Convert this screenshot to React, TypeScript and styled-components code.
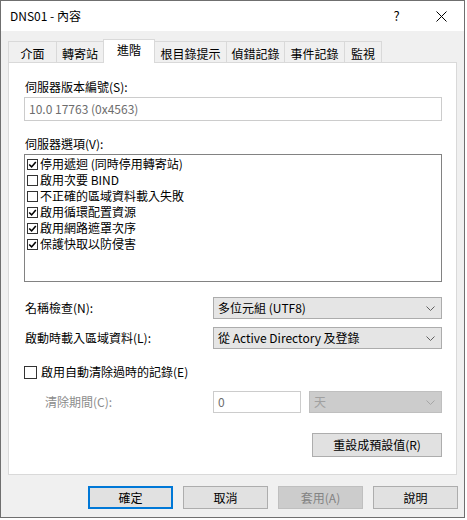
import React from "react";
import styled, { createGlobalStyle } from "styled-components";

const GlobalStyle = createGlobalStyle`
  body {
    margin: 0;
    background: #ffffff;
    font-family: "Segoe UI", "Noto Sans CJK TC", sans-serif;
    font-size: 12px;
    line-height: 16px;
    color: #000000;
  }
`;

const Window = styled.div`
  width: 465px;
  height: 518px;
  box-sizing: border-box;
  border: 1px solid #6f6f6f;
  display: flex;
  flex-direction: column;
  background: #f0f0f0;
`;

const TitleBar = styled.div`
  height: 30px;
  background: #ffffff;
  display: flex;
  align-items: center;
  padding-left: 9px;
`;

const Title = styled.div`
  flex: 1;
`;

const TitleButton = styled.div`
  width: 45px;
  height: 30px;
  display: flex;
  align-items: center;
  justify-content: center;
  font-size: 13px;
`;

const Body = styled.div`
  flex: 1;
  display: flex;
  flex-direction: column;
  padding: 8px 7px 0 7px;
`;

const TabStrip = styled.div`
  height: 23px;
  display: flex;
  align-items: flex-end;
`;

const Tab = styled.div<{ $w: number; $active?: boolean }>`
  width: ${(p) => p.$w}px;
  height: ${(p) => (p.$active ? 24 : 21)}px;
  box-sizing: border-box;
  margin-left: -1px;
  margin-bottom: ${(p) => (p.$active ? -1 : 0)}px;
  padding-top: ${(p) => (p.$active ? 2 : 4)}px;
  border: 1px solid #d9d9d9;
  border-bottom: none;
  background: ${(p) => (p.$active ? "#ffffff" : "#f0f0f0")};
  text-align: center;
  position: relative;
  z-index: ${(p) => (p.$active ? 1 : 0)};
  &:first-child {
    margin-left: 0;
  }
`;

const Panel = styled.div`
  height: 413px;
  box-sizing: border-box;
  border: 1px solid #d9d9d9;
  background: #ffffff;
  padding: 16px 14px 0 15px;
  display: flex;
  flex-direction: column;
`;

const Label = styled.div<{ $gap?: number; $muted?: boolean }>`
  margin-top: ${(p) => p.$gap ?? 0}px;
  padding-left: 1px;
  color: ${(p) => (p.$muted ? "#8c8c8c" : "#000000")};
`;

const TextBox = styled.div<{ $w?: number; $disabled?: boolean }>`
  height: ${(p) => (p.$w ? 22 : 24)}px;
  width: ${(p) => (p.$w ? `${p.$w}px` : "auto")};
  margin-top: ${(p) => (p.$w ? 0 : 2)}px;
  box-sizing: border-box;
  border: 1px solid #cccccc;
  background: #ffffff;
  color: #6d6d6d;
  display: flex;
  align-items: center;
  padding-left: 4px;
`;

const ListBox = styled.div`
  height: 128px;
  margin-top: 2px;
  box-sizing: border-box;
  border: 1px solid #828282;
  background: #ffffff;
  padding: 1px 2px;
`;

const ListItem = styled.div`
  height: 16px;
  display: flex;
  align-items: center;
  gap: 2px;
`;

const FieldRow = styled.div<{ $gap: number }>`
  margin-top: ${(p) => p.$gap}px;
  display: grid;
  grid-template-columns: 1fr 229px;
  align-items: center;
`;

const Combo = styled.div<{ $disabled?: boolean; $w?: number }>`
  height: 22px;
  width: ${(p) => (p.$w ? `${p.$w}px` : "auto")};
  box-sizing: border-box;
  border: 1px solid ${(p) => (p.$disabled ? "#bfbfbf" : "#acacac")};
  background: ${(p) => (p.$disabled ? "#cccccc" : "#e5e5e5")};
  color: ${(p) => (p.$disabled ? "#a0a0a0" : "#000000")};
  display: flex;
  align-items: center;
  justify-content: space-between;
  padding: 0 6px 0 4px;
`;

const CheckRow = styled.label`
  margin-top: 15px;
  display: flex;
  align-items: center;
  gap: 4px;
`;

const PurgeRow = styled.div`
  margin-top: 11px;
  display: grid;
  grid-template-columns: 1fr 229px;
  align-items: center;
`;

const PurgeLabel = styled.div`
  padding-left: 21px;
  color: #8c8c8c;
`;

const PurgeControls = styled.div`
  display: flex;
  gap: 8px;
`;

const ResetRow = styled.div`
  margin-top: 20px;
  display: flex;
  justify-content: flex-end;
`;

const Button = styled.div<{ $w: number; $h?: number; $default?: boolean; $disabled?: boolean }>`
  width: ${(p) => p.$w}px;
  height: ${(p) => p.$h ?? 23}px;
  box-sizing: border-box;
  border: ${(p) => (p.$default ? "2px solid #0078d7" : `1px solid ${p.$disabled ? "#bfbfbf" : "#adadad"}`)};
  background: ${(p) => (p.$disabled ? "#cccccc" : "#e1e1e1")};
  color: ${(p) => (p.$disabled ? "#838383" : "#000000")};
  display: flex;
  align-items: center;
  justify-content: center;
`;

const ButtonBar = styled.div`
  margin-top: 11px;
  margin-right: -1px;
  display: flex;
  justify-content: flex-end;
  gap: 10px;
`;

const Check = ({ checked, size }: { checked: boolean; size: number }) => (
  <svg width={size} height={size} viewBox={`0 0 ${size} ${size}`} style={{ flex: "none" }}>
    <rect x={0.5} y={0.5} width={size - 1} height={size - 1} fill="#fff" stroke="#333" />
    {checked && (
      <polyline
        points={`${size * 0.2},${size * 0.5} ${size * 0.42},${size * 0.72} ${size * 0.8},${size * 0.27}`}
        fill="none"
        stroke="#000"
        strokeWidth={1.6}
      />
    )}
  </svg>
);

const Chevron = ({ color }: { color: string }) => (
  <svg width="9" height="5" viewBox="0 0 9 5">
    <polyline points="0.5,0.5 4.5,4.5 8.5,0.5" fill="none" stroke={color} strokeWidth={1} />
  </svg>
);

const tabs = [
  { label: "介面", w: 49 },
  { label: "轉寄站", w: 48 },
  { label: "進階", w: 52, active: true },
  { label: "根目錄提示", w: 73 },
  { label: "偵錯記錄", w: 59 },
  { label: "事件記錄", w: 61 },
  { label: "監視", w: 38 },
];

const options = [
  { label: "停用遞迴 (同時停用轉寄站)", checked: true },
  { label: "啟用次要 BIND", checked: false },
  { label: "不正確的區域資料載入失敗", checked: false },
  { label: "啟用循環配置資源", checked: true },
  { label: "啟用網路遮罩次序", checked: true },
  { label: "保護快取以防侵害", checked: true },
];

export default function App() {
  return (
    <>
      <GlobalStyle />
      <Window>
        <TitleBar>
          <Title>DNS01 - 內容</Title>
          <TitleButton>?</TitleButton>
          <TitleButton>
            <svg width="11" height="11" viewBox="0 0 11 11">
              <path d="M0.5 0.5 L10.5 10.5 M10.5 0.5 L0.5 10.5" stroke="#000" strokeWidth={1} />
            </svg>
          </TitleButton>
        </TitleBar>
        <Body>
          <TabStrip>
            {tabs.map((t) => (
              <Tab key={t.label} $w={t.w} $active={t.active}>
                {t.label}
              </Tab>
            ))}
          </TabStrip>
          <Panel>
            <Label>伺服器版本編號(S):</Label>
            <TextBox>10.0 17763 (0x4563)</TextBox>
            <Label $gap={15}>伺服器選項(V):</Label>
            <ListBox>
              {options.map((o) => (
                <ListItem key={o.label}>
                  <Check checked={o.checked} size={11} />
                  {o.label}
                </ListItem>
              ))}
            </ListBox>
            <FieldRow $gap={15}>
              <Label>名稱檢查(N):</Label>
              <Combo>
                多位元組 (UTF8)
                <Chevron color="#606060" />
              </Combo>
            </FieldRow>
            <FieldRow $gap={8}>
              <Label>啟動時載入區域資料(L):</Label>
              <Combo>
                從 Active Directory 及登錄
                <Chevron color="#606060" />
              </Combo>
            </FieldRow>
            <CheckRow>
              <Check checked={false} size={13} />
              啟用自動清除過時的記錄(E)
            </CheckRow>
            <PurgeRow>
              <PurgeLabel>清除期間(C):</PurgeLabel>
              <PurgeControls>
                <TextBox $w={88}>0</TextBox>
                <Combo $disabled $w={133}>
                  天
                  <Chevron color="#a6a6a6" />
                </Combo>
              </PurgeControls>
            </PurgeRow>
            <ResetRow>
              <Button $w={130} $h={24}>
                重設成預設值(R)
              </Button>
            </ResetRow>
          </Panel>
          <ButtonBar>
            <Button $w={85} $default>
              確定
            </Button>
            <Button $w={85}>取消</Button>
            <Button $w={85} $disabled>
              套用(A)
            </Button>
            <Button $w={85}>說明</Button>
          </ButtonBar>
        </Body>
      </Window>
    </>
  );
}
